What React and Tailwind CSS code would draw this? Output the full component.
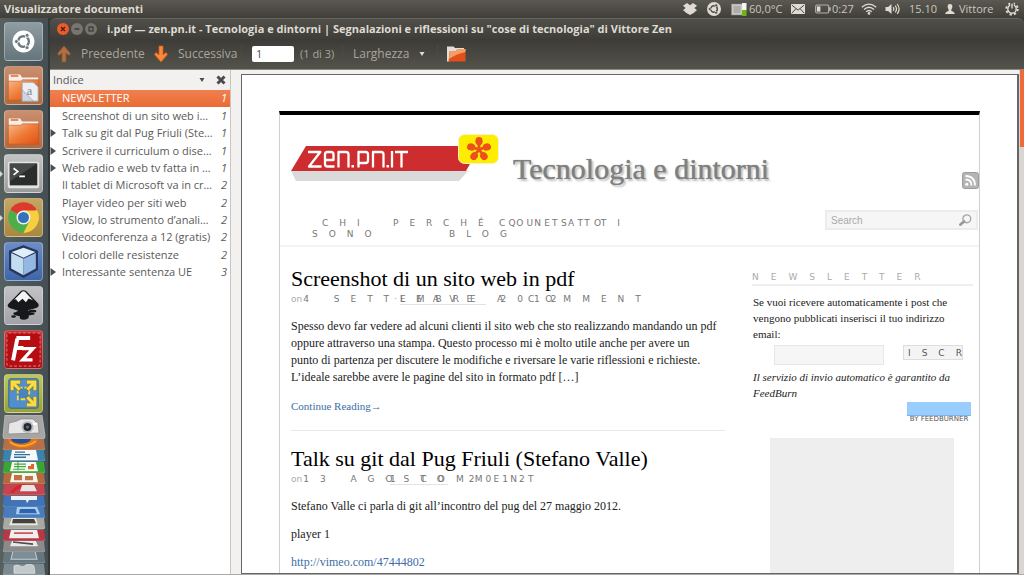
import React from "react";

/* ---------- top panel glyphs ---------- */

function DropboxIcon() {
  return (
    <svg viewBox="0 0 14 12" className="h-3 w-3.5 fill-[#dfdbd2]" aria-hidden="true">
      <path d="M4 0 7 2.2 10 0 14 2.8 11.4 5 14 7.2 11.5 9 11.5 9.6 7 12 2.5 9.6 2.5 9 0 7.2 2.6 5 0 2.8Z" />
    </svg>
  );
}

function CircleOfFriends({ className, ring, hole }) {
  return (
    <svg viewBox="0 0 24 24" className={className} aria-hidden="true">
      <circle cx="12" cy="12" r="12" fill={ring} />
      <circle cx="12" cy="12" r="5.6" fill="none" stroke={hole} strokeWidth="2.6" />
      <g stroke={ring} strokeWidth="1.4">
        <path d="M12 12H4M12 12 16.5 4.5M12 12l4.5 7.5" />
      </g>
      <circle cx="12" cy="12" r="3.6" fill={ring} />
      <g fill={hole} stroke={ring} strokeWidth="0.9">
        <circle cx="4.6" cy="12" r="2.3" />
        <circle cx="15.7" cy="5.6" r="2.3" />
        <circle cx="15.7" cy="18.4" r="2.3" />
      </g>
    </svg>
  );
}

function CpuIcon() {
  return (
    <svg viewBox="0 0 16 14" className="h-3.5 w-4 shrink-0" aria-hidden="true">
      <rect x="0.5" y="2" width="11" height="11" fill="#c9c7c2" stroke="#8d8b85" strokeDasharray="1 1" />
      <rect x="2.5" y="4" width="7" height="7" fill="#aeaca7" />
      <rect x="11" y="1" width="4.5" height="7" fill="#f4f4f2" />
      <rect x="11" y="8" width="4.5" height="6" fill="#6fb512" />
    </svg>
  );
}

function MailIcon() {
  return (
    <svg viewBox="0 0 14 10" className="h-2.5 w-3.5" aria-hidden="true">
      <rect width="14" height="10" rx="1" fill="#dfdbd2" />
      <path d="M1 1.2 7 6.2 13 1.2M1 9 5 4.6M13 9 9 4.6" fill="none" stroke="#4a4942" strokeWidth="1" />
    </svg>
  );
}

function BatteryIcon() {
  return (
    <svg viewBox="0 0 16 10" className="h-2.5 w-4 shrink-0" aria-hidden="true">
      <rect x="0.7" y="1" width="13" height="8" rx="1.4" fill="none" stroke="#b5b2aa" strokeWidth="1.2" />
      <rect x="2" y="2.4" width="3.4" height="5.2" fill="#dfdbd2" />
      <rect x="14" y="3.2" width="1.8" height="3.6" fill="#b5b2aa" />
    </svg>
  );
}

function WifiIcon() {
  return (
    <svg viewBox="0 0 16 12" className="h-3 w-4" aria-hidden="true">
      <g fill="none" stroke="#dfdbd2" strokeWidth="1.3">
        <path d="M0.8 4.2Q8-2 15.2 4.2" />
        <path d="M3 6.6Q8 2 13 6.6" />
        <path d="M5.2 8.8Q8 6.2 10.8 8.8" />
      </g>
      <circle cx="8" cy="10.4" r="1.3" fill="#dfdbd2" />
    </svg>
  );
}

function VolumeIcon() {
  return (
    <svg viewBox="0 0 16 12" className="h-3 w-4" aria-hidden="true">
      <path d="M0.5 4h2.6L6.5 1v10L3.1 8H0.5Z" fill="#dfdbd2" />
      <g fill="none" stroke="#dfdbd2" strokeWidth="1.2">
        <path d="M8.2 4.2Q9.6 6 8.2 7.8" />
        <path d="M10.2 2.6Q12.8 6 10.2 9.4" />
        <path d="M12.2 1Q16 6 12.2 11" />
      </g>
    </svg>
  );
}

function UserIcon() {
  return (
    <svg viewBox="0 0 10 10" className="h-2.5 w-2.5 shrink-0 fill-[#dfdbd2]" aria-hidden="true">
      <path d="M5 0C7 0 7.6 1.6 7.3 3.2 7 4.8 6.2 5.4 6.2 6.2 6.2 7.4 9.6 7.4 9.8 10H0.2C0.4 7.4 3.8 7.4 3.8 6.2 3.8 5.4 3 4.8 2.7 3.2 2.4 1.6 3 0 5 0Z" />
    </svg>
  );
}

function PowerIcon() {
  return (
    <svg viewBox="0 0 14 14" className="h-3.5 w-3.5" aria-hidden="true">
      <circle cx="7" cy="7" r="5.7" fill="none" stroke="#dfdbd2" strokeWidth="2" strokeDasharray="2.24 2.24" />
      <circle cx="7" cy="7" r="4.2" fill="none" stroke="#dfdbd2" strokeWidth="1.4" />
      <path d="M7 0V7" stroke="#4a4942" strokeWidth="3.4" />
      <path d="M7 1.5V6.5" stroke="#dfdbd2" strokeWidth="1.4" />
    </svg>
  );
}

function TopPanel() {
  return (
    <header className="flex h-[18px] shrink-0 items-center justify-between bg-linear-to-b from-[#5a5850] to-[#403f3a] pr-[5px] pl-1 text-[#dfdbd2]">
      <span className="text-[11px] font-bold">Visualizzatore documenti</span>
      <div className="flex items-center text-[11px] text-[#cbc7be]">
        <DropboxIcon />
        <CircleOfFriends className="ml-2.5 h-3.5 w-3.5" ring="#dfdbd2" hole="#4a4942" />
        <span className="ml-2.5 flex w-[52px] items-center gap-0.5"><CpuIcon />60,0°C</span>
        <span className="ml-2"><MailIcon /></span>
        <span className="ml-2.5 flex w-[38px] items-center gap-px"><BatteryIcon />0:27</span>
        <span className="ml-2"><WifiIcon /></span>
        <span className="ml-2"><VolumeIcon /></span>
        <span className="ml-2 w-7">15.10</span>
        <span className="ml-2 flex w-[50px] items-center gap-1"><UserIcon />Vittore</span>
        <span className="ml-2.5"><PowerIcon /></span>
      </div>
    </header>
  );
}

/* ---------- launcher ---------- */

function FolderShape() {
  return (
    <g>
      <path d="M4 8h12l2 3h17v8H4Z" fill="#f6efe9" />
      <path d="M6 9.5h8" stroke="#e8642a" strokeWidth="1.4" />
      <path d="M3.5 15h13l2-1.5h17V35h-32Z" fill="url(#folderFill)" stroke="#c44e1a" strokeWidth="0.6" />
    </g>
  );
}

const tiles = [
  {
    name: "Dash home",
    bg: "bg-linear-to-b from-[#8f9da3] to-[#65757c]",
    art: (
      <g>
        <circle cx="19.5" cy="19.5" r="11.5" fill="#fff" />
        <circle cx="19.5" cy="19.5" r="5.6" fill="none" stroke="#6a7a81" strokeWidth="2.6" />
        <path d="M19.5 19.5h-8M19.5 19.5l4.3-7.4M19.5 19.5l4.3 7.4" stroke="#fff" strokeWidth="1.3" />
        <circle cx="19.5" cy="19.5" r="4" fill="#fff" />
        <g fill="#6a7a81" stroke="#fff" strokeWidth="0.9">
          <circle cx="12" cy="19.5" r="2.1" /><circle cx="23.3" cy="13" r="2.1" /><circle cx="23.3" cy="26" r="2.1" />
        </g>
      </g>
    ),
  },
  {
    name: "Documenti",
    bg: "bg-linear-to-b from-[#c98f70] to-[#b06a40]",
    art: (
      <g>
        <FolderShape />
        <path d="M18 16h12l5 5v15H18Z" fill="#eceef2" stroke="#9aa0ac" strokeWidth="1" />
        <path d="M18 24 30 36H18Z" fill="#cfd5e0" stroke="#8d94a3" strokeWidth="0.7" />
        <text x="23" y="30" fontSize="13" fontFamily="Liberation Serif, serif" fill="#7b8290">a</text>
      </g>
    ),
  },
  { name: "Cartella home", bg: "bg-linear-to-b from-[#c98f70] to-[#b06a40]", art: <FolderShape /> },
  {
    name: "Terminale",
    bg: "bg-linear-to-b from-[#c4c4c4] to-[#9b9b9b]",
    art: (
      <g>
        <rect x="3" y="7" width="33" height="28" rx="2" fill="#e4e4e2" />
        <rect x="5" y="9" width="29" height="23" fill="#2b2c2c" />
        <path d="M5 9h29L5 28Z" fill="#474949" />
        <path d="M9 14l4.5 3.5L9 21M15 22.5h6" fill="none" stroke="#fff" strokeWidth="1.8" />
      </g>
    ),
  },
  {
    name: "Google Chrome",
    bg: "bg-linear-to-b from-[#c4a765] to-[#a88740]",
    art: (
      <g>
        <path d="M19.5 19.5 5.6 11.5A16 16 0 0 1 33.4 11.5Z" fill="#dd3a2e" />
        <path d="M19.5 19.5 33.4 11.5A16 16 0 0 1 19.5 35.5Z" fill="#f6cf3f" />
        <path d="M19.5 19.5 19.5 35.5A16 16 0 0 1 5.6 11.5Z" fill="#4fae4a" />
        <path d="M19.5 12.2H33.7A16 16 0 0 1 19.5 35.5L26 23Z" fill="#f6cf3f" />
        <path d="M13 23 5.6 11.5 19.5 19.5 26 23 19.5 35.5 Z" fill="#4fae4a" />
        <circle cx="19.5" cy="19.5" r="7.4" fill="#f4f4f4" />
        <circle cx="19.5" cy="19.5" r="5.8" fill="#3273bb" />
      </g>
    ),
  },
  {
    name: "VirtualBox",
    bg: "bg-linear-to-b from-[#6c8dc6] to-[#3f66a8]",
    art: (
      <g strokeLinejoin="round">
        <path d="M19.5 3 34 8.5V28L19.5 36 5 28V8.5Z" fill="#26365c" stroke="#26365c" strokeWidth="1.5" />
        <path d="M19.5 5 32 9.5 19.5 15.5 7 9.5Z" fill="#dfeef8" />
        <path d="M6.500 10.500 19.500 16.500V34L6.500 27Z" fill="#c4dcf0" />
        <path d="M32.500 10.500 19.500 16.500V34L32.500 27Z" fill="#94b8e2" />
      </g>
    ),
  },
  {
    name: "Inkscape",
    bg: "bg-linear-to-b from-[#c2c2c6] to-[#a2a2a8]",
    art: (
      <g fill="#17181a">
        <path d="M19.5 3.5Q22 3.5 24 6L35 17.5Q37 21 32 22.5L24 24.5 27 27Q32 27 31 29L25 30Q26 34 20 34.5 14 34 16 31L10 29.5Q7 27 11 26.500L14 25 5.500 22.500Q1 20.500 4 17.500L15 6Q17 3.500 19.500 3.500Z" />
        <path d="M19.5 4.500Q21 4.500 23 7L29.500 14 25 12 22 16 18.500 12.500 14 16 11.500 13 9.500 13.500 16 7Q18 4.500 19.500 4.500Z" fill="#f3f4f6" />
        <ellipse cx="29" cy="25.500" rx="4" ry="1.500" />
        <ellipse cx="9" cy="31" rx="2.500" ry="1.300" />
      </g>
    ),
  },
  {
    name: "FileZilla",
    bg: "bg-linear-to-b from-[#c7383b] to-[#a30b10]",
    art: (
      <g>
        <rect x="2" y="2" width="35" height="35" rx="2" fill="#b50d12" stroke="#db6a6d" strokeWidth="1.2" strokeDasharray="3 2" />
        <path d="M12 7.500h14.500M10 18h9.500M13 8 8.500 31" stroke="#fff" strokeWidth="4.200" fill="none" />
        <path d="M18 18.500h11.500L18.500 30.500h10.500" stroke="#fff" strokeWidth="3.400" fill="none" />
      </g>
    ),
  },
  {
    name: "Desktop remoto",
    bg: "bg-linear-to-b from-[#bfc661] to-[#98a238]",
    art: (
      <g>
        <rect x="4" y="4" width="31" height="31" rx="2" fill="#4f8fce" stroke="#2f639b" />
        <rect x="13.500" y="13.500" width="12" height="12" fill="#4a84bf" stroke="#f4d83c" strokeWidth="2" strokeDasharray="5 2" />
        <g fill="none" stroke="#8a7420" strokeWidth="4.600">
          <path d="M16 16 8 8M23 16 31 8M23 23 31 31" />
          <path d="M7.500 16.500V7.500H16.500M22.500 7.500h9V16.500M31.500 22.500v9H22.500" />
        </g>
        <g fill="none" stroke="#f8dd48" strokeWidth="3.200">
          <path d="M15.500 15.500 8 8M23.500 15.500 31 8M23.500 23.500 31 31" />
          <path d="M7.500 16V7.500H16M23 7.500h8.500V16M31.500 23v8.500H23" />
        </g>
      </g>
    ),
  },
];

const folded = [
  { name: "Firefox", fill: "#b56f49", art: <g><ellipse cx="23" cy="0" rx="15" ry="9" fill="#e8711c" /><ellipse cx="21" cy="0" rx="10" ry="4.500" fill="#274f8f" /><path d="M10 3Q22 11 36 2" stroke="#f5b32c" strokeWidth="1.500" fill="none" /></g> },
  { name: "Writer", fill: "#3984ad", art: <g><path d="M12 0h24l2 10H10Z" fill="#f4f8fa" /><path d="M15 2h10M14 4.500h16M14 7h12" stroke="#2f6f99" strokeWidth="1.300" /></g> },
  { name: "Calc", fill: "#39a536", art: <g><path d="M12 0h24l2 9H10Z" fill="#f4faf3" /><path d="M14 2h12M14 4.500h12M13 7h12M18 0v8" stroke="#45a742" strokeWidth="1.100" /><path d="M28 7V4h3V2h3v5Z" fill="#d66b32" /></g> },
  { name: "Impress", fill: "#b4693e", art: <g><path d="M12 0h24l2 9H10Z" fill="#faf4ee" /><path d="M14 2h8v5h-8ZM25 3h8v4h-8Z" fill="#c27345" /></g> },
  { name: "Strumenti", fill: "#c44450", art: <g><path d="M10 8Q18-1 25 0L24 4Q17 4 13 9Z" fill="#d6252f" /><path d="M22 1h12l3 6H20Z" fill="#e9e5e3" /></g> },
  { name: "Messaggi", fill: "#4273b4", art: <path d="M11 0h26v4H29l-2 3-1-3H11Z" fill="#edf2f9" /> },
  { name: "Schermo", fill: "#4a7cbb", art: <g><path d="M17 0h20l3 7H16Z" fill="#a9cdf0" /><path d="M20 2h15l2 4H19Z" fill="#2c64ae" /></g> },
  { name: "Scanner", fill: "#a9a9a2", art: <g><path d="M12 0h24l2 7H9Z" fill="#e6e6e2" /><path d="M13 1h21l2 4H12Z" fill="#41433f" /></g> },
  { name: "Visualizzatore documenti", fill: "#b93845", art: <g><path d="M11 0h26l2 8H9Z" fill="#f1eeee" /><path d="M14 3h19" stroke="#c4343f" strokeWidth="1.400" /></g> },
  { name: "Editor", fill: "#8b8b8b", art: <g><path d="M12 0h24l2 5H10Z" fill="#e9e9e9" /><path d="M13 1 33 3" stroke="#4c4c4c" strokeWidth="1.600" /></g> },
  { name: "Spazi di lavoro", fill: "#66767e", art: <path d="M13-1h22l2 8H11Z" fill="#7e8e96" stroke="#c6ced2" /> },
  { name: "Cestino", fill: "#7c8b91", art: <path d="M14 2q3-2 6 0t6-1 8 1l1 7H14Z" fill="#c2c9ca" stroke="#e3e7e8" strokeWidth="0.700" /> },
];

function Launcher() {
  return (
    <nav aria-label="Launcher" className="flex w-[50px] shrink-0 flex-col overflow-hidden border-r-2 border-[#34393b] bg-linear-to-r from-[#56615f] via-[#4b5659] to-[#454f53] pt-1">
      <svg className="h-0 w-0" aria-hidden="true">
        <defs>
          <linearGradient id="folderFill" x1="0" y1="0" x2="1" y2="1">
            <stop offset="0" stopColor="#f8b98c" />
            <stop offset="0.5" stopColor="#ee7a35" />
            <stop offset="1" stopColor="#dd5213" />
          </linearGradient>
        </defs>
      </svg>
      <ul className="flex flex-col gap-[5px]">
        {tiles.map((tile, i) => (
          <li key={tile.name} className="flex items-center">
            <span className="flex w-1 justify-start">
              {(i === 3 || i === 4) && (
                <svg viewBox="0 0 3 6" className="h-1.5 w-[3px] fill-[#d8d8d6]" aria-hidden="true"><path d="M0 0 3 3 0 6Z" /></svg>
              )}
            </span>
            <button type="button" aria-label={tile.name} className={`h-[39px] w-[39px] overflow-hidden rounded-[4px] border border-white/30 ${tile.bg}`}>
              <svg viewBox="0 0 39 39" className="h-full w-full" aria-hidden="true">{tile.art}</svg>
            </button>
          </li>
        ))}
      </ul>
      <button type="button" aria-label="Fotocamera" className="mt-0.5 h-6 w-12 shrink-0">
        <svg viewBox="0 0 48 24" className="h-6 w-12" aria-hidden="true">
          <path d="M5 0H42L45 21Q45 24 43 24H5Q3 24 3 21Z" fill="#a6a5a3" stroke="#c8c7c5" strokeWidth="0.700" />
          <path d="M9 8 17 6 21 4H33L36 7H38L39 18 8 19Z" fill="#e6e6e6" stroke="#7b7b7b" strokeWidth="0.600" />
          <circle cx="27.500" cy="12" r="6" fill="#b7b9bc" />
          <circle cx="27.500" cy="12" r="4" fill="#24282e" />
          <circle cx="27.500" cy="12" r="1.600" fill="#596c8a" />
          <rect x="33" y="8" width="3.500" height="2" fill="#fff" />
        </svg>
      </button>
      <ul className="flex min-h-0 flex-1 flex-col">
        {folded.map((item) => (
          <li key={item.name} className="min-h-0 flex-1">
            <button type="button" aria-label={item.name} className="block h-full w-12 overflow-hidden">
              <svg viewBox="0 0 48 11" preserveAspectRatio="none" className="h-full w-12" aria-hidden="true">
                <path d="M4 0H44L45 9Q45 11 43 11H5Q3 11 3 9Z" fill={item.fill} />
                {item.art}
                <path d="M3 9Q3 10.700 5 10.700H43Q45 10.700 45 9" fill="none" stroke="#ffffff" strokeOpacity="0.350" strokeWidth="0.600" />
              </svg>
            </button>
          </li>
        ))}
      </ul>
    </nav>
  );
}

/* ---------- viewer window ---------- */

function TitleBar() {
  return (
    <div className="flex h-[21px] shrink-0 items-center rounded-t-md border-t border-[#66645c] bg-linear-to-b from-[#504f49] to-[#3e3d39] pl-[7px]">
      <div className="flex gap-0.5">
        <button type="button" aria-label="Chiudi" className="h-3 w-3 rounded-full bg-[#ec5b29]">
          <svg viewBox="0 0 12 12" aria-hidden="true"><path d="M4 4l4 4M8 4 4 8" stroke="#4a2114" strokeWidth="1.400" /></svg>
        </button>
        <button type="button" aria-label="Minimizza" className="h-3 w-3 rounded-full bg-[#77756d]">
          <svg viewBox="0 0 12 12" aria-hidden="true"><path d="M3.500 6h5" stroke="#3a3935" strokeWidth="1.400" /></svg>
        </button>
        <button type="button" aria-label="Massimizza" className="h-3 w-3 rounded-full bg-[#77756d]">
          <svg viewBox="0 0 12 12" aria-hidden="true"><rect x="4" y="4" width="4" height="4" fill="none" stroke="#3a3935" strokeWidth="1.200" /></svg>
        </button>
      </div>
      <h1 className="ml-2.5 truncate text-[11px] font-bold text-[#dfdbd2]">
        i.pdf — zen.pn.it - Tecnologia e dintorni | Segnalazioni e riflessioni su "cose di tecnologia" di Vittore Zen
      </h1>
    </div>
  );
}

function Arrow({ down }) {
  return (
    <svg viewBox="0 0 14 18" className="h-[18px] w-3.5" aria-hidden="true">
      <path
        d={down ? "M5 1h4v9l3-2.500 1.500 2L7 17 0.500 9.500 2 7.500 5 10Z" : "M5 17h4V8l3 2.500 1.500-2L7 1 0.500 8.500 2 10.500 5 8Z"}
        fill={down ? "#f58a3c" : "#b06f43"}
        stroke={down ? "#e0561c" : "#925633"}
        strokeWidth="0.800"
      />
    </svg>
  );
}

function Toolbar() {
  return (
    <div className="flex h-[31px] shrink-0 items-center border-b border-[#8b8982] bg-linear-to-b from-[#3c3b37] to-[#54534b] pl-[7px] text-[12px] text-[#a9a69d]">
      <button type="button" className="flex w-[97px] items-center gap-2.5"><Arrow />Precedente</button>
      <button type="button" className="flex w-[87px] items-center gap-2.5"><Arrow down />Successiva</button>
      <span className="h-[18px] border-l border-[#4b4a44]" />
      <input aria-label="Pagina" defaultValue="1" className="ml-2.5 h-4 w-[42px] rounded-[2px] bg-white px-1 text-[11px] text-[#4c4c4c]" />
      <span className="ml-1.5 w-[42px] text-[11px]">(1 di 3)</span>
      <span className="h-[18px] border-l border-[#4b4a44]" />
      <div className="relative ml-2.5 flex items-center">
        <select aria-label="Ingrandimento" className="w-[76px] appearance-none bg-transparent">
          <option>Larghezza</option>
        </select>
        <svg viewBox="0 0 6 4" className="pointer-events-none absolute right-1 h-1 w-1.5 fill-[#dfdbd2]" aria-hidden="true"><path d="M0.500 0h5L3 4Z" /></svg>
      </div>
      <span className="ml-2 h-[18px] border-l border-[#4b4a44]" />
      <button type="button" aria-label="Apri cartella" className="ml-2">
        <svg viewBox="0 0 20 16" className="h-4 w-5" aria-hidden="true">
          <path d="M1 0.500h6.500l1.500 1.500H18V6L3 15.500H1Z" fill="#e6ddd8" />
          <path d="M3.500 5.500h6L11.500 3H19.500V15.500H2.500Z" fill="#e4501a" />
          <path d="M3.500 5.500h6L11.500 3H19.500V6Q10 8 3 13Z" fill="#f3a066" />
        </svg>
      </button>
    </div>
  );
}

const outline = [
  ["NEWSLETTER", 1, false],
  ["Screenshot di un sito web i…", 1, false],
  ["Talk su git dal Pug Friuli (Ste…", 1, true],
  ["Scrivere il curriculum o dise…", 1, true],
  ["Web radio e web tv fatta in …", 1, true],
  ["Il tablet di Microsoft va in cr…", 2, false],
  ["Player video per siti web", 2, false],
  ["YSlow, lo strumento d’anali…", 2, false],
  ["Videoconferenza a 12 (gratis)", 2, false],
  ["I colori delle resistenze", 2, false],
  ["Interessante sentenza UE", 3, true],
];

function Sidebar() {
  return (
    <aside className="flex w-[181px] shrink-0 flex-col border-r border-[#c9c6c1] bg-white text-[#5a5a5a]">
      <div className="flex h-5 items-center justify-between bg-[#f2f1f0] pr-1 pl-[3px]">
        <div className="relative flex items-center">
          <select aria-label="Riquadro laterale" className="w-[152px] appearance-none bg-transparent text-[11px]">
            <option>Indice</option>
          </select>
          <svg viewBox="0 0 6 4" className="pointer-events-none absolute right-0 h-1 w-1.5 fill-[#4c4c4c]" aria-hidden="true"><path d="M0.500 0h5L3 4Z" /></svg>
        </div>
        <button type="button" aria-label="Nascondi riquadro">
          <svg viewBox="0 0 10 10" className="h-2.5 w-2.5" aria-hidden="true"><path d="M1.500 1.500l7 7M8.500 1.500l-7 7" stroke="#4c4c4c" strokeWidth="3" /></svg>
        </button>
      </div>
      <ul className="grid h-[191px] auto-rows-fr text-[11px]">
        {outline.map(([title, page, expandable], i) => (
          <li key={title} className={i === 0 ? "bg-linear-to-b from-[#f1804f] to-[#e96b34] text-white" : ""}>
            <a href="#" className="flex h-full items-center pr-[3px]">
              <span className="w-3 shrink-0">
                {expandable && (
                  <svg viewBox="0 0 6 8" className="h-2 w-1.5 fill-[#4c4c4c]" aria-hidden="true"><path d="M0.500 0 6 4 0.500 8Z" /></svg>
                )}
              </span>
              <span className="min-w-0 flex-1 whitespace-nowrap">{title}</span>
              <span className="italic">{page}</span>
            </a>
          </li>
        ))}
      </ul>
    </aside>
  );
}

/* ---------- document page ---------- */

function Logo() {
  return (
    <svg viewBox="0 0 210 50" className="h-[50px] w-[210px]" role="img" aria-label="zen.pn.it">
      <path d="M0 37H177L168 47H5Z" fill="#d9dbda" />
      <path d="M15 12H189L175 37H0Z" fill="#cd2d2e" />
      <g fill="none" stroke="#fff" strokeWidth="2.300" strokeLinejoin="round">
        <path d="M17 18H29.300L18 32.500H30.500" />
        <path d="M34.500 26H42.500V20.500Q42.500 18 40 18H36.500Q34 18 34 20.500V30Q34 32.500 36.500 32.500H43.500" />
        <path d="M47.500 33.500V18H55Q57.500 18 57.500 20.500V33.500" />
        <path d="M67.500 33.500V18H74.500Q77 18 77 20.500V26.500Q77 29 74.500 29H67.500" />
        <path d="M82 33.500V18H90Q92.500 18 92.500 20.500V33.500" />
        <path d="M101 17V33.500M104 18H117M110.500 18V33.500" />
      </g>
      <path d="M60.500 31h2.500v2.500h-2.500zM95.500 31h2.500v2.500h-2.500z" fill="#fff" />
      <rect x="167.500" y="0.500" width="40" height="29" rx="6" fill="#ffed00" stroke="#f7f3cf" />
      <g fill="#ee4f1f">
        <ellipse cx="188" cy="7.200" rx="3.600" ry="4.100" />
        <ellipse cx="188" cy="7.200" rx="3.600" ry="4.100" transform="rotate(72 188 15.500)" />
        <ellipse cx="188" cy="7.200" rx="3.600" ry="4.100" transform="rotate(144 188 15.500)" />
        <ellipse cx="188" cy="7.200" rx="3.600" ry="4.100" transform="rotate(216 188 15.500)" />
        <ellipse cx="188" cy="7.200" rx="3.600" ry="4.100" transform="rotate(288 188 15.500)" />
      </g>
      <path d="M188 15.500V8M188 15.500l7-2.300M188 15.500l4.400 6M188 15.500l-4.400 6M188 15.500l-7-2.300" stroke="#ee4f1f" strokeWidth="2.800" />
    </svg>
  );
}

function SiteHeader() {
  return (
    <header className="border-b-2 border-[#f3f3f3]">
      <div className="flex h-[82px] items-start pt-[19px] pl-[11px]">
        <Logo />
        <h2 className="mt-[17px] ml-3 flex-1 whitespace-nowrap text-[30px] leading-9 text-[#808080] [text-shadow:0_0_1px_#808080,2px_2px_2px_#bbbbbb]">
          Tecnologia e dintorni
        </h2>
        <a href="#" aria-label="RSS" className="mt-[38px]">
          <svg viewBox="0 0 17 17" className="h-[17px] w-[17px]" aria-hidden="true">
            <rect x="0.500" y="0.500" width="16" height="16" rx="2" fill="#b4b4b4" stroke="#9c9c9c" />
            <circle cx="4.800" cy="12.200" r="1.500" fill="#fff" />
            <path d="M3.500 7.500Q9.500 7.500 9.500 13.500M3.500 4Q13 4 13 13.500" fill="none" stroke="#fff" strokeWidth="1.800" />
          </svg>
        </a>
      </div>
      <div className="flex h-12 items-start justify-between pt-[13px] pr-px">
        <nav className="relative flex pt-2 pl-8 font-['DejaVu_Sans',sans-serif] text-[9px] leading-[11px] tracking-[11px] whitespace-nowrap text-[#777777]">
          <a href="#" className="w-[81px]"><span className="block pl-2.5">CHI</span><span className="block">SONO</span></a>
          <a href="#"><span className="block">PERCHÉ QUESTO</span><span className="block pl-14">BLOG</span></a>
          <a href="#" className="absolute left-[219px]">CONTATTI</a>
        </nav>
        <form className="flex h-5 w-[153px] items-center border-2 border-[#ececec] bg-[#f6f6f6] pr-1">
          <input aria-label="Search" placeholder="Search" className="w-0 flex-1 pl-1 font-['Liberation_Sans',sans-serif] text-[10px] placeholder:text-[#aaaaaa]" />
          <button type="submit" aria-label="Cerca">
            <svg viewBox="0 0 13 12" className="h-3 w-[13px]" aria-hidden="true">
              <circle cx="7.800" cy="4.800" r="3.900" fill="none" stroke="#a5a5a5" strokeWidth="1.400" />
              <path d="M5 7.500 1.500 10.500" stroke="#999999" strokeWidth="2.800" strokeLinecap="round" />
            </svg>
          </button>
        </form>
      </div>
    </header>
  );
}

function Meta({ date, note, noteOffset, underline }) {
  return (
    <p className="relative flex h-4 items-center gap-px font-['DejaVu_Sans',sans-serif] text-[9px] whitespace-nowrap text-[#777777]">
      <span className="text-[#aaaaaa]">on</span>
      <span className="tracking-[11px]">{date}</span>
      <span className={`absolute top-0 flex h-4 items-center ${noteOffset}`}>
        <span className="w-1.5 text-[#aaaaaa]">·</span>
        <a href="#" className="tracking-[11px]">{note}</a>
        <span className={`absolute bottom-0.5 left-1.5 border-b border-[#e3e3e3] ${underline}`} />
      </span>
    </p>
  );
}

function Posts() {
  return (
    <main className="w-[434px] shrink-0 text-[12px] leading-[17px] text-[#222222]">
      <article className="border-b border-[#e8e8e8] pb-[15px]">
        <h3 className="text-[22px] leading-6 text-black">Screenshot di un sito web in pdf</h3>
        <Meta date="4 SETTEMBRE 2012" note="LEAVE A COMMENT" noteOffset="left-[103px]" underline="w-[86px]" />
        <p className="mt-[11px]">
          Spesso devo far vedere ad alcuni clienti il sito web che sto realizzando mandando un pdf
          <br />
          oppure attraverso una stampa. Questo processo mi è molto utile anche per avere un
          <br />
          punto di partenza per discutere le modifiche e riversare le varie riflessioni e richieste.
          <br />
          L’ideale sarebbe avere le pagine del sito in formato pdf […]
        </p>
        <a href="#" className="mt-3 block text-[11px] text-[#3a6ea5]">Continue Reading→</a>
      </article>
      <article className="pt-4">
        <h3 className="text-[22px] leading-6 text-black">Talk su git dal Pug Friuli (Stefano Valle)</h3>
        <Meta date="13 AGOSTO 2012" note="1 COMMENT" noteOffset="left-[93px]" underline="w-[58px]" />
        <p className="mt-[11px]">Stefano Valle ci parla di git all’incontro del pug del 27 maggio 2012.</p>
        <p className="mt-[11px]">player 1</p>
        <a href="#" className="mt-[11px] block text-[#3a6ea5]">http://vimeo.com/47444802</a>
      </article>
    </main>
  );
}

function Aside() {
  return (
    <aside className="w-[221px] shrink-0 text-[11px] leading-4 text-[#222222]">
      <h3 className="mt-[3px] border-b-2 border-[#eeeeee] font-['DejaVu_Sans',sans-serif] text-[9px] leading-[14px] tracking-[12px] text-[#aaaaaa]">NEWSLETTER</h3>
      <form className="mt-2 px-px">
        <label htmlFor="email">Se vuoi ricevere automaticamente i post che vengono pubblicati inserisci il tuo indirizzo email:</label>
        <div className="mt-[3px] flex h-6 items-start justify-between pr-[9px] pl-[21px]">
          <input id="email" type="email" className="h-5 w-[110px] border border-[#e6e6e6] bg-[#f6f6f6]" />
          <button type="submit" className="h-[15px] w-[60px] overflow-hidden border border-[#dddddd] bg-[#f4f4f4] pl-1 text-left font-['DejaVu_Sans',sans-serif] text-[9px] leading-[14px] tracking-[11px] whitespace-nowrap text-[#555555]">ISCRIVITI</button>
        </div>
        <p className="italic">Il servizio di invio automatico è garantito da FeedBurn</p>
      </form>
      <div className="flex flex-col items-end pt-px pr-0.5">
        <a href="#" className="flex flex-col text-center font-['DejaVu_Sans',sans-serif] text-[7px] leading-[6px] text-[#555555]">
          <span className="h-3.5 w-16 border-b border-[#7fb2e6] bg-[#99ccff]" />
          BY FEEDBURNER
        </a>
      </div>
      <div className="mt-4 ml-[18px] h-[160px] w-[184px] bg-[#eeeeee]" />
    </aside>
  );
}

function Viewer() {
  return (
    <div className="flex min-w-0 flex-1 bg-[#f2f1f0] pt-1 pl-2.5">
      <div className="min-w-0 flex-1 overflow-hidden border border-r-2 border-[#666666] bg-white px-[37px] pt-9">
        <div className="border-x border-t-4 border-x-[#cfcfcf] border-t-black font-['Liberation_Serif',serif]">
          <SiteHeader />
          <div className="flex justify-between pt-5 pr-1.5 pl-[11px]">
            <Posts />
            <Aside />
          </div>
        </div>
      </div>
      <div className="-mt-1 w-[5px] bg-[#d9d6d1] pl-px">
        <div className="h-[77px] bg-[#ee6a3a]" />
      </div>
    </div>
  );
}

export default function App() {
  return (
    <div className="flex h-screen flex-col overflow-hidden bg-[#3c3b37] font-['Open_Sans',sans-serif] leading-normal">
      <TopPanel />
      <div className="flex min-h-0 flex-1">
        <Launcher />
        <section className="flex min-w-0 flex-1 flex-col">
          <TitleBar />
          <Toolbar />
          <div className="flex min-h-0 flex-1 border-b border-[#aaaaaa]">
            <Sidebar />
            <Viewer />
          </div>
        </section>
      </div>
    </div>
  );
}
